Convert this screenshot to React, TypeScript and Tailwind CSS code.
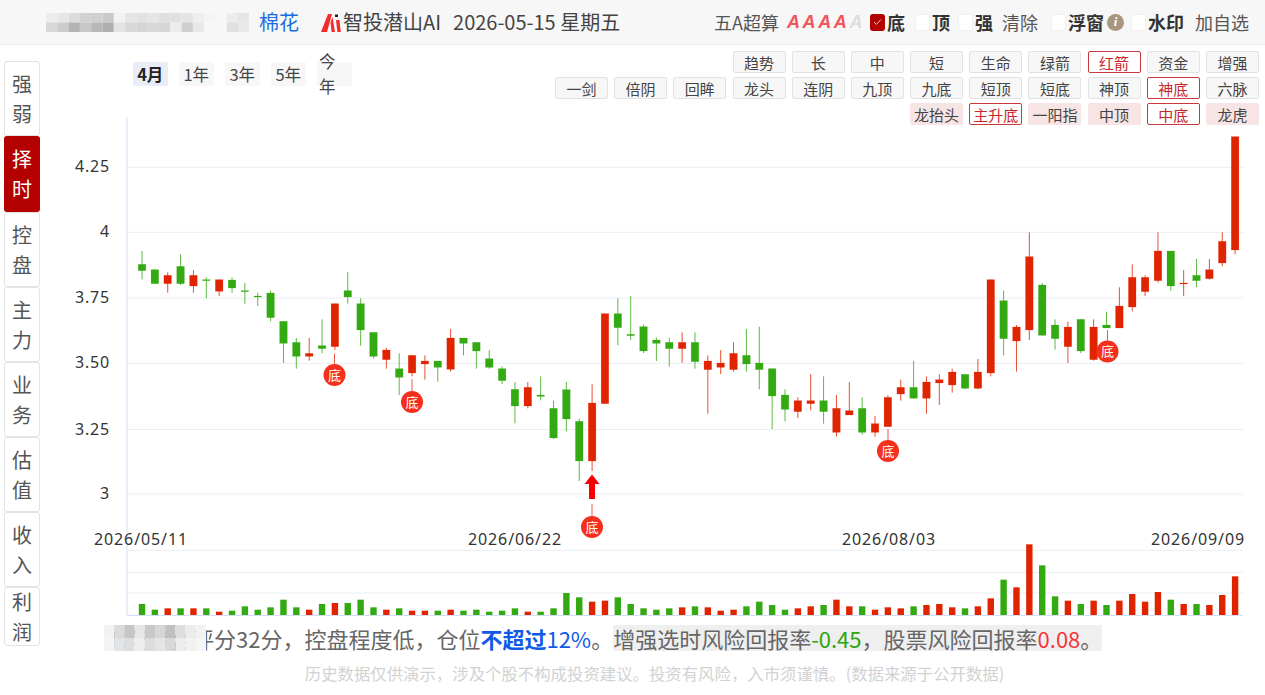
import React from 'react';

// page coordinates, read off the screenshot
const CJK = "font-['Noto_Sans_CJK_SC','Noto_Sans',sans-serif]";

type Candle = [0 | 1, number, number, number, number]; // up, bodyTop, bodyBottom, high, low (page y)

const z3 = (v: number) => 230 + v / 3;
const z4 = (v: number) => 280 + v / 3;
const z5 = (v: number) => 130 + v / 3;

const raw3: [0 | 1, number, number, number, number][] = [
  [0, 103, 122, 63, 148], [0, 119, 161, 119, 161], [1, 136, 161, 127, 188], [0, 109, 161, 73, 165],
  [1, 136, 168, 120, 188], [0, 149, 151, 142, 205], [1, 149, 184, 149, 198], [0, 150, 174, 142, 188],
  [0, 182, 185, 159, 221], [0, 198, 200, 188, 228], [0, 189, 263, 182, 274], [0, 274, 340, 274, 399],
  [0, 337, 379, 324, 416], [1, 370, 379, 324, 392], [0, 347, 356, 268, 370], [1, 221, 350, 221, 360],
  [0, 182, 201, 126, 221], [0, 221, 300, 205, 347], [0, 307, 379, 307, 386], [1, 360, 389, 353, 416],
  [0, 416, 442, 370, 495], [1, 376, 429, 376, 439], [1, 393, 402, 376, 449], [0, 393, 412, 393, 455],
  [1, 324, 418, 297, 425], [0, 324, 340, 324, 376], [0, 337, 363, 337, 416], [0, 386, 412, 360, 416],
  [0, 416, 452, 409, 462],
];
const raw4: [0 | 1, number, number, number, number][] = [
  [0, 328, 378, 306, 430], [1, 322, 378, 306, 385], [0, 345, 349, 289, 361], [0, 385, 474, 362, 477],
  [0, 329, 417, 306, 454], [0, 424, 543, 415, 603], [1, 369, 543, 313, 573], [1, 101, 371, 101, 371],
  [0, 101, 143, 55, 196], [0, 163, 167, 48, 180], [0, 140, 213, 134, 219], [0, 180, 190, 173, 243],
  [0, 187, 206, 173, 260], [1, 187, 206, 157, 249], [0, 187, 245, 157, 266], [1, 243, 269, 226, 401],
  [1, 249, 262, 210, 282], [1, 220, 269, 187, 275], [0, 226, 252, 147, 275], [0, 249, 269, 140, 328],
  [0, 266, 348, 266, 447], [0, 345, 388, 328, 424], [1, 362, 395, 352, 414], [1, 362, 371, 282, 391],
  [0, 362, 395, 289, 431], [1, 385, 457, 345, 470], [1, 392, 405, 306, 405],
];
const raw5: [0 | 1, number, number, number, number][] = [
  [0, 835, 907, 802, 914], [1, 881, 907, 858, 920], [1, 802, 890, 796, 890], [1, 772, 792, 749, 812],
  [0, 772, 805, 693, 805], [1, 756, 805, 739, 851], [1, 749, 759, 733, 825], [1, 726, 765, 716, 788],
  [0, 733, 775, 733, 778], [1, 726, 775, 687, 778], [1, 449, 729, 449, 739], [0, 512, 626, 482, 676],
  [1, 591, 633, 585, 725], [1, 380, 600, 307, 630], [0, 465, 616, 459, 616], [0, 585, 626, 568, 659],
  [1, 591, 650, 575, 699], [0, 568, 663, 568, 669], [1, 591, 689, 568, 692], [0, 585, 594, 545, 594],
  [1, 528, 594, 472, 594], [1, 442, 531, 403, 544], [1, 442, 485, 436, 498], [1, 363, 452, 307, 458],
  [0, 363, 468, 363, 482], [1, 459, 462, 420, 498], [0, 436, 452, 387, 472], [1, 419, 446, 387, 449],
  [1, 334, 399, 307, 409], [1, 20, 360, 20, 373],
];

const conv = (rows: [0 | 1, number, number, number, number][], f: (v: number) => number): Candle[] =>
  rows.map(([u, a, b, c, d]) => [u, f(a), f(b), f(c), f(d)]);

const candles: Candle[] = [...conv(raw3, z3), ...conv(raw4, z4), ...conv(raw5, z5)];

const volumeTops = [
  252, 269, 265, 265, 265, 265, 275, 272, 259, 269, 262, 239, 262, 269, 252, 249, 249, 239, 262, 269, 265, 272,
  272, 272, 269, 272, 269, 275, 272, 265, 275, 275, 265, 219, 232, 245, 242, 232, 252, 265, 269, 265, 262, 259,
  262, 272, 269, 259, 245, 255, 269, 265, 259, 255, 239, 259, 259, 269, 262, 265, 259, 255, 252, 262, 265, 259,
  235, 179, 202, 73, 136, 229, 242, 252, 242, 255, 242, 222, 245, 216, 239, 252, 252, 255, 225, 169,
];

const RED = '#e12400';
const GREEN = '#33a912';
const cx = (i: number) => 142 + i * 12.86;

const priceTicks: [string, number][] = [
  ['4.25', 167.3],
  ['4', 232.3],
  ['3.75', 298],
  ['3.50', 363.3],
  ['3.25', 429.5],
  ['3', 494],
];
const dateTicks: [string, number][] = [
  ['2026/05/11', 141],
  ['2026/06/22', 515],
  ['2026/08/03', 889],
  ['2026/09/09', 1198],
];
const markers: [number, number, number][] = [
  [334.5, 375, 353.5],
  [412, 402, 379],
  [592, 527, 504],
  [888, 451, 429],
  [1107.5, 351.5, 330],
];

function Chart() {
  return (
    <svg viewBox="44 117 1221 503" className="block w-[1221px] h-[503px] -mt-2">
      {priceTicks.map(([label, y]) => (
        <g key={label}>
          <line x1={127} x2={1243} y1={y} y2={y} stroke="#e9eef3" strokeWidth={1} />
          <text x={110} y={y + 5} textAnchor="end" fill="#333" className="font-['Noto_Sans'] text-[16px] tracking-[0.8px]">
            {label}
          </text>
        </g>
      ))}
      {[550.3, 572.3, 593].map((y) => (
        <line key={y} x1={127} x2={1243} y1={y} y2={y} stroke="#e9eef3" strokeWidth={1} />
      ))}
      <line x1={127} x2={127} y1={117} y2={615} stroke="#d4def2" strokeWidth={1} />
      <line x1={127} x2={1243} y1={615.5} y2={615.5} stroke="#d4def2" strokeWidth={1} />

      {dateTicks.map(([label, x]) => (
        <text key={label} x={x} y={544.5} textAnchor="middle" fill="#333" className="font-['Noto_Sans'] text-[16px] tracking-[0.9px]">
          {label}
        </text>
      ))}

      {candles.map(([up, top, bottom, high, low], i) => (
        <g key={i} fill={up ? RED : GREEN} stroke={up ? RED : GREEN}>
          <line x1={cx(i)} x2={cx(i)} y1={high} y2={low} strokeWidth={1} strokeOpacity={0.8} />
          <rect x={cx(i) - 3.8} y={top} width={7.6} height={Math.max(bottom - top, 1)} strokeWidth={0.5} strokeOpacity={0.4} />
        </g>
      ))}

      {volumeTops.map((t, i) => {
        const y = 520 + t / 3;
        return <rect key={i} x={cx(i) - 3.2} y={y} width={6.4} height={615 - y} fill={candles[i][0] ? RED : GREEN} />;
      })}

      {markers.map(([x, y, stem]) => (
        <g key={x}>
          <line x1={x} x2={x} y1={stem} y2={y - 10} stroke="#ee5b45" strokeWidth={1} />
          <circle cx={x} cy={y} r={11} fill="#f5301c" />
          <text x={x} y={y + 4.5} textAnchor="middle" fill="#fff" className={`${CJK} text-[13px]`}>
            底
          </text>
        </g>
      ))}
      {/* buy arrow */}
      <path d="M592 474.5l7.5 9.5h-4.5v15h-6v-15h-4.5z" fill="#f60000" />
    </svg>
  );
}

const mosaicTop = [
  '#ececec', '#e6e6e6', '#dcdcdc', '#d2d2d2', '#cfcfcf', '#cacaca', '#f2f2f2', '#e6e6e6', '#e2e2e2', '#e6e6e6',
  '#e0e0e0', '#e0e0e0', '#e4e4e4', '#efefef', '#f4f4f4', '#f7f7f7', '#ececec', '#e6e6e6',
];
const mosaicBottom = [
  '#d8d8d8', '#cccccc', '#b4b4b4', '#c8c8c8', '#b8b8b8', '#b0b0b0', '#e4e4e4', '#d8d8d8', '#d4d4d4', '#d8d8d8',
  '#d6d6d6', '#ececec', '#cfcfcf', '#e8e8e8', '#f7f7f7', '#f7f7f7', '#e0e0e0', '#e8e8e8',
];

function NameMosaic() {
  return (
    <svg width={203} height={19} viewBox="0 0 203 19" className="shrink-0">
      {mosaicTop.map((c, i) => (
        <rect key={i} x={i * 11.3} y={0} width={11.3} height={9.5} fill={c} />
      ))}
      {mosaicBottom.map((c, i) => (
        <rect key={i} x={i * 11.3} y={9.5} width={11.3} height={9.5} fill={c} />
      ))}
    </svg>
  );
}

function Logo() {
  return (
    <svg width={20} height={19} viewBox="0 0 20 19" className="shrink-0">
      <path d="M0 19L7 1h4L6 19z" fill="#f22c2c" />
      <path d="M9.5 9L11.5 4l2.5 15h-3.4z" fill="#f22c2c" />
      <path d="M14 1.5h3L17 4h-3z" fill="#222" />
      <path d="M15 7h3.4l1.4 12h-3.4z" fill="#f22c2c" />
    </svg>
  );
}

function Check({ checked, label }: { checked?: boolean; label: string }) {
  return (
    <span className="flex items-center gap-[2px]">
      {checked ? (
        <span className="w-[15px] h-[17px] rounded-[3px] bg-[#b30000] flex items-center justify-center">
          <svg width={9} height={8} viewBox="0 0 9 8">
            <path d="M1 4l2.4 2.4L8 1.5" fill="none" stroke="#f3c9c9" strokeWidth={1} />
          </svg>
        </span>
      ) : (
        <span className="w-[15px] h-[17px] rounded-[3px] bg-white border border-[#f0f0f0]" />
      )}
      <span className="text-[18px] font-bold text-[#333] leading-none">{label}</span>
    </span>
  );
}

function Header() {
  return (
    <header className="h-[45px] shrink-0 bg-[#f7f7f7] border-b border-[#efefef] flex items-center pl-[46px] pr-[16px]">
      <NameMosaic />
      <span className="ml-[10px] text-[20px] text-[#1a6fe0]">棉花</span>
      <span className="ml-[22px] mr-[2px]">
        <Logo />
      </span>
      <span className="text-[20px] text-[#444]">智投潜山AI</span>
      <span className="ml-[12px] text-[20px] text-[#444]">2026-05-15 星期五</span>
      <div className="ml-auto flex items-center text-[18px] text-[#555]">
        <span>五A超算</span>
        <span className="ml-[8px] flex font-['Liberation_Sans'] italic font-bold text-[18px] tracking-[2.6px] text-[#f0555c]">
          AAAA<span className="text-[#dddddd]">A</span>
        </span>
        <span className="ml-[5px]">
          <Check checked label="底" />
        </span>
        <span className="ml-[10px]">
          <Check label="顶" />
        </span>
        <span className="ml-[8px]">
          <Check label="强" />
        </span>
        <span className="ml-[9px]">清除</span>
        <span className="ml-[13px]">
          <Check label="浮窗" />
        </span>
        <span className="ml-[3px] w-[17px] h-[17px] rounded-full bg-[#a8977f] flex items-center justify-center font-['Liberation_Serif'] italic font-bold text-[13px] text-white">
          i
        </span>
        <span className="ml-[7px]">
          <Check label="水印" />
        </span>
        <span className="ml-[11px]">加自选</span>
      </div>
    </header>
  );
}

const sideTabs: [string, string][] = [
  ['强弱', 'h-[75px]'],
  ['择时', 'h-[76px]'],
  ['控盘', 'h-[75px]'],
  ['主力', 'h-[75px]'],
  ['业务', 'h-[75px]'],
  ['估值', 'h-[75px]'],
  ['收入', 'h-[75px]'],
  ['利润', 'h-[59px]'],
];

function Sidebar() {
  return (
    <nav className="w-[44px] shrink-0 pl-[4px] pt-[16px] flex flex-col">
      {sideTabs.map(([label, h]) => (
        <div
          key={label}
          className={
            label === '择时'
              ? `${h} w-[36px] rounded-[3px] bg-[#b30000] text-white text-[20px] leading-[30px] flex items-center justify-center text-center`
              : `${h} w-[36px] rounded-[3px] border border-[#e3e3e3] bg-white text-[#555] text-[20px] leading-[30px] flex items-center justify-center text-center`
          }
        >
          <span className="w-[20px] block">{label}</span>
        </div>
      ))}
    </nav>
  );
}

type Tone = 'plain' | 'outline' | 'pink';
const toneClass: Record<Tone, string> = {
  plain: 'bg-[#f7f7f7] border border-[#e2e2e2] text-[#444]',
  outline: 'bg-white border border-[#c9383d] text-[#c9252b]',
  pink: 'bg-[#f7e4e5] border border-[#f7e4e5] text-[#444]',
};

const row1: [string, Tone][] = [
  ['趋势', 'plain'], ['长', 'plain'], ['中', 'plain'], ['短', 'plain'], ['生命', 'plain'],
  ['绿箭', 'plain'], ['红箭', 'outline'], ['资金', 'plain'], ['增强', 'plain'],
];
const row2: [string, Tone][] = [
  ['一剑', 'plain'], ['倍阴', 'plain'], ['回眸', 'plain'], ['龙头', 'plain'], ['连阴', 'plain'], ['九顶', 'plain'],
  ['九底', 'plain'], ['短顶', 'plain'], ['短底', 'plain'], ['神顶', 'plain'], ['神底', 'outline'], ['六脉', 'plain'],
];
const row3: [string, Tone][] = [
  ['龙抬头', 'pink'], ['主升底', 'outline'], ['一阳指', 'pink'], ['中顶', 'pink'], ['中底', 'outline'], ['龙虎', 'pink'],
];

function ButtonRow({ items }: { items: [string, Tone][] }) {
  return (
    <div className="flex justify-end gap-[6.2px]">
      {items.map(([label, tone]) => (
        <span
          key={label}
          className={`w-[53px] h-[22px] rounded-[2px] flex items-center justify-center text-[15px] leading-none ${toneClass[tone]}`}
        >
          {label}
        </span>
      ))}
    </div>
  );
}

const ranges = ['4月', '1年', '3年', '5年', '今年'];

function Toolbar() {
  return (
    <div className="relative z-10 h-[80px] shrink-0 flex justify-between pt-[6px] pr-[6px] pl-[89px] -mb-0">
      <div className="flex gap-[11.5px] pt-[11px] items-start">
        {ranges.map((r, i) => (
          <span
            key={r}
            className={
              i === 0
                ? 'h-[24px] px-[3px] w-[34.5px] rounded-[2px] bg-[#e8edf6] text-[16.5px] font-bold text-[#222] flex items-center justify-center'
                : 'h-[24px] px-[2px] w-[34.5px] rounded-[2px] bg-[#f7f7f7] text-[16.5px] text-[#444] flex items-center justify-center'
            }
          >
            {r}
          </span>
        ))}
      </div>
      <div className="flex flex-col gap-[4px]">
        <ButtonRow items={row1} />
        <ButtonRow items={row2} />
        <ButtonRow items={row3} />
      </div>
    </div>
  );
}

const blurRows = [
  ['#f2f2f2', '#dadada', '#c6c6c6', '#e6e6e6', '#c8c8c8', '#d6d6d6', '#c0c0c0', '#dedede', '#ececec', '#f2f2f2'],
  ['#f4f4f4', '#e4e4e4', '#dedede', '#eeeeee', '#dcdcdc', '#e4e4e4', '#d8d8d8', '#ececec', '#f2f2f2', '#f6f6f6'],
];

function Summary() {
  return (
    <p className="relative h-[30px] mt-[5px] ml-[60px] text-[22px] leading-[26px] text-[#666] whitespace-nowrap">
      <span className="text-[#666]">棉花综合评分32分，控盘程度低，仓位</span>
      <span className="font-bold text-[#0f5be8]">不超过</span>
      <span className="text-[#0f5be8]">12%</span>
      <span>。</span>
      <span className="inline-block bg-[#efefef]">
        增强选时风险回报率<span className="text-[#2ba60f]">-0.45</span>，股票风险回报率
        <span className="text-[#f5353b]">0.08</span>。
      </span>
      <svg width={102} height={26} viewBox="0 0 102 26" className="absolute left-0 top-0">
        {blurRows.map((row, r) =>
          row.map((c, i) => <rect key={`${r}-${i}`} x={i * 10.2} y={r * 13} width={10.2} height={13} fill={c} />),
        )}
      </svg>
    </p>
  );
}

export default function App() {
  return (
    <div className={`w-[1265px] h-[695px] overflow-hidden bg-white flex flex-col ${CJK}`}>
      <Header />
      <div className="flex flex-1 min-h-0">
        <Sidebar />
        <main className="flex-1 min-w-0 flex flex-col">
          <Toolbar />
          <Chart />
          <Summary />
          <p className="mt-[6px] text-center text-[16.4px] leading-[24px] text-[#d2d2d2] whitespace-nowrap">
            历史数据仅供演示，涉及个股不构成投资建议。投资有风险，入市须谨慎。(数据来源于公开数据)
          </p>
        </main>
      </div>
    </div>
  );
}
